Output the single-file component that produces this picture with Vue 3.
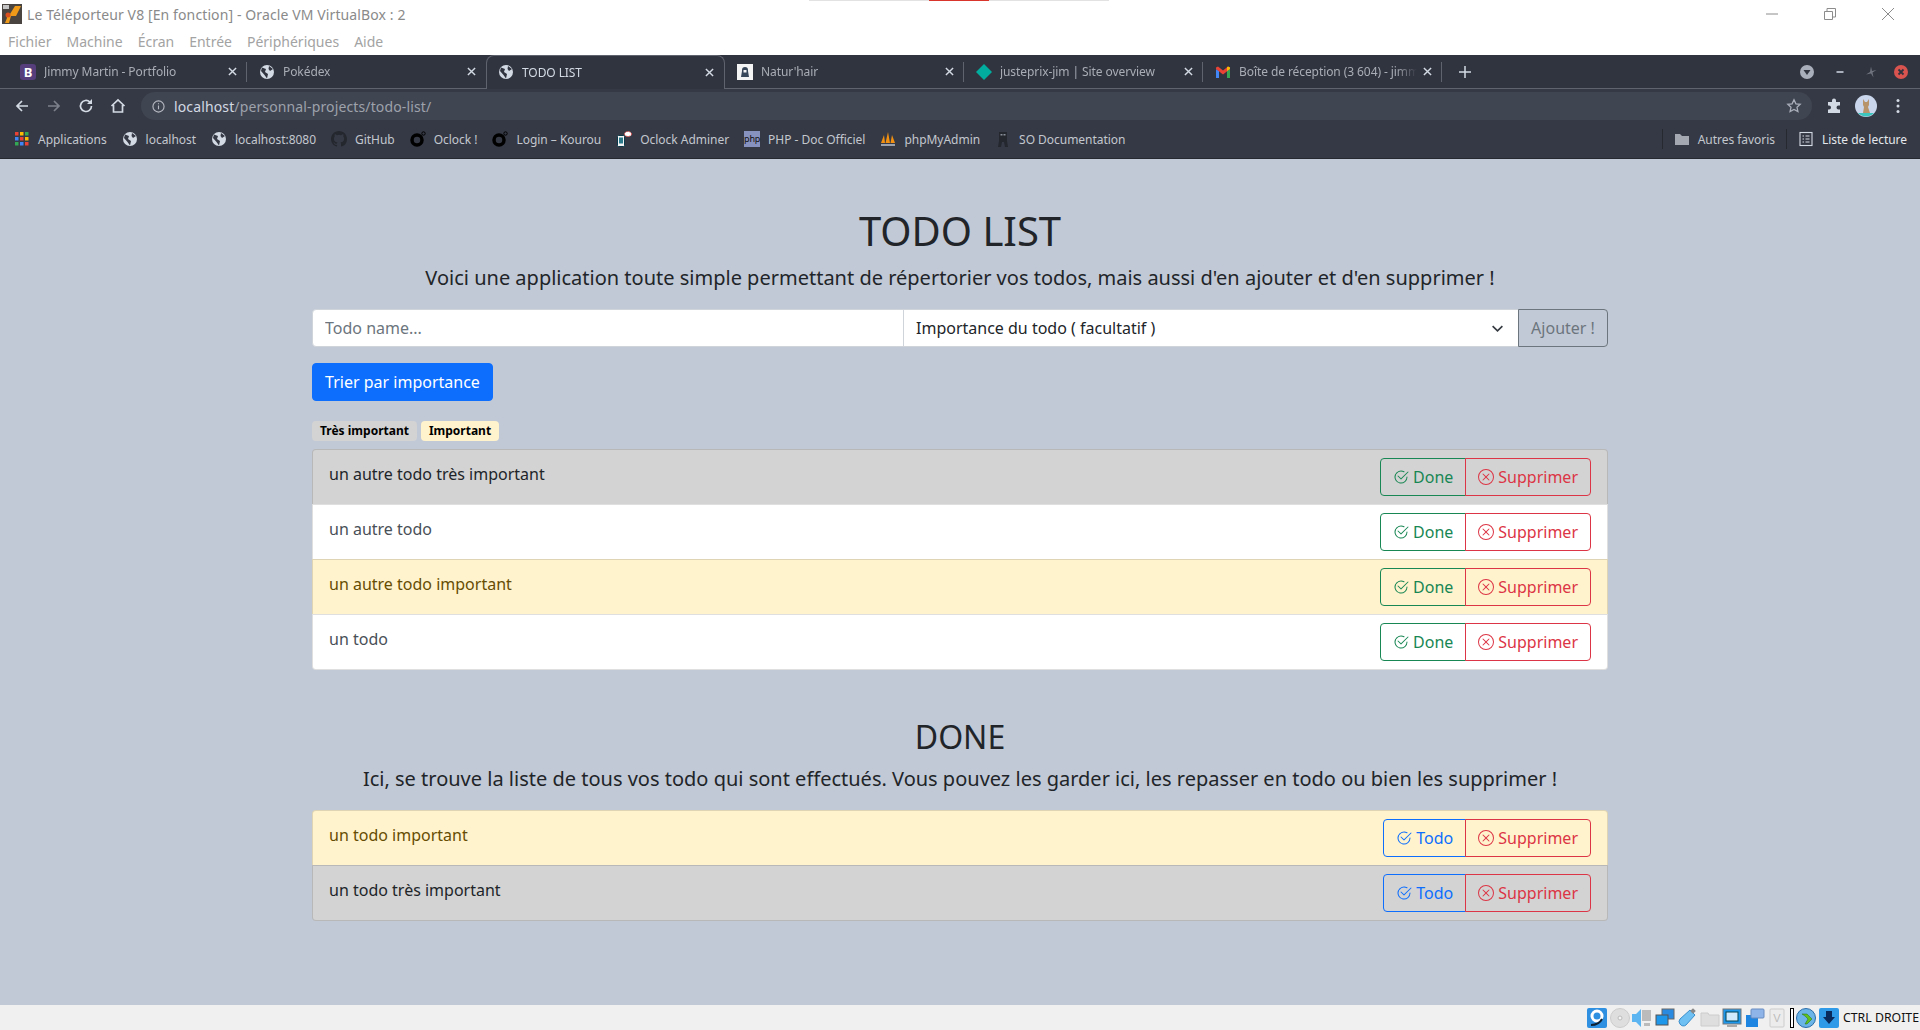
<script setup>
const menus = ['Fichier', 'Machine', 'Écran', 'Entrée', 'Périphériques', 'Aide']

const tabs = [
  { title: 'Jimmy Martin - Portfolio', icon: 'bootstrap' },
  { title: 'Pokédex', icon: 'globe' },
  { title: 'TODO LIST', icon: 'globe', active: true },
  { title: "Natur'hair", icon: 'hair' },
  { title: 'justeprix-jim | Site overview', icon: 'netlify' },
  { title: 'Boîte de réception (3 604) - jimmy', icon: 'gmail' },
]

const bookmarks = [
  { label: 'Applications', icon: 'apps' },
  { label: 'localhost', icon: 'globe' },
  { label: 'localhost:8080', icon: 'globe' },
  { label: 'GitHub', icon: 'github' },
  { label: 'Oclock !', icon: 'oclock' },
  { label: 'Login – Kourou', icon: 'oclock' },
  { label: 'Oclock Adminer', icon: 'adminer' },
  { label: 'PHP - Doc Officiel', icon: 'php' },
  { label: 'phpMyAdmin', icon: 'pma' },
  { label: 'SO Documentation', icon: 'so' },
]

const todos = [
  { name: 'un autre todo très important', level: 'high' },
  { name: 'un autre todo', level: 'none' },
  { name: 'un autre todo important', level: 'mid' },
  { name: 'un todo', level: 'none' },
]

const done = [
  { name: 'un todo important', level: 'mid' },
  { name: 'un todo très important', level: 'high' },
]
</script>

<template>
  <div class="screen">
    <!-- VirtualBox window -->
    <header class="vbox-head">
      <div class="vbox-strip"><i></i></div>
      <div class="vbox-title">
        <svg class="vbox-logo" viewBox="0 0 20 20">
          <rect width="20" height="20" fill="#4a4440" />
          <rect x="1" y="1" width="6" height="4" fill="#c4c4c4" />
          <path d="M4 10h4l5-8h6l-5 10H9l-2 7H3l2-5z" fill="#f09a1a" />
          <circle cx="6" cy="11" r="2.500" fill="#d9501e" />
        </svg>
        <span class="vbox-name">Le Téléporteur V8 [En fonction] - Oracle VM VirtualBox : 2</span>
        <div class="win-controls">
          <svg viewBox="0 0 12 12"><path d="M0 6h12" /></svg>
          <svg viewBox="0 0 12 12"><path d="M.5 3.500h8v8h-8zM3 3V.5h8.500V9H9" /></svg>
          <svg viewBox="0 0 12 12"><path d="M0 0l12 12M12 0L0 12" /></svg>
        </div>
      </div>
      <nav class="vbox-menu">
        <span v-for="m in menus" :key="m">{{ m }}</span>
      </nav>
    </header>

    <!-- Browser chrome -->
    <section class="browser">
      <div class="tabstrip">
        <div
          v-for="t in tabs"
          :key="t.title"
          class="tab"
          :class="{ 'tab--active': t.active }"
        >
          <span v-if="t.icon === 'bootstrap'" class="fav fav-b">B</span>
          <svg v-else-if="t.icon === 'globe'" class="fav" viewBox="0 0 16 16">
            <circle cx="8" cy="8" r="7" fill="#d3dae3" />
            <path d="M3 3.500 L7 5 L6 8 L9 10 L8 14.500 L5.500 11 L2 7z M10 2 L14 5 L11 7 L9.500 5z" fill="#30343f" />
          </svg>
          <svg v-else-if="t.icon === 'hair'" class="fav" viewBox="0 0 16 16">
            <rect width="16" height="16" fill="#f4f4f4" />
            <path d="M8 3a3 3 0 0 1 3 3v1l1 6H4l1-6V6a3 3 0 0 1 3-3z" fill="#38465a" />
            <rect x="6.500" y="6" width="3" height="2.500" fill="#f4f4f4" />
          </svg>
          <svg v-else-if="t.icon === 'netlify'" class="fav" viewBox="0 0 16 16">
            <path d="M8 0l8 8-8 8-8-8z" fill="#00ad9f" />
          </svg>
          <svg v-else class="fav" viewBox="0 0 16 16">
            <path d="M1 5v9h3V7z" fill="#4285f4" />
            <path d="M12 7v7h3V5z" fill="#34a853" />
            <path d="M1 3.500L3 2.500 8 6.500 13 2.500 15 3.500V5L8 10.500 1 5z" fill="#ea4335" />
            <path d="M12 3.300L13 2.500 15 3.500V5L12 7z" fill="#fbbc04" />
          </svg>
          <span class="tab-title">{{ t.title }}</span>
          <svg class="tab-close" viewBox="0 0 10 10"><path d="M1 1l8 8M9 1L1 9" /></svg>
        </div>
        <svg class="tab-plus" viewBox="0 0 12 12"><path d="M6 0v12M0 6h12" /></svg>
        <div class="gtk-controls">
          <svg class="gtk-down" viewBox="0 0 14 14">
            <circle cx="7" cy="7" r="7" fill="#aab0bb" />
            <path d="M3.500 5h7L7 10z" fill="#30343f" />
          </svg>
          <svg class="gtk-small" viewBox="0 0 14 14"><path d="M2.500 7h7" /></svg>
          <svg class="gtk-spark" viewBox="0 0 14 14"><path d="M7 1.500L8 6l4.500-1L8.500 7.500 9.500 12.500 7 8.500 2 9.500 6 7z" /></svg>
          <svg class="gtk-close" viewBox="0 0 14 14">
            <circle cx="7" cy="7" r="7" fill="#d9534f" />
            <path d="M4.500 4.500l5 5M9.500 4.500l-5 5" />
          </svg>
        </div>
      </div>

      <div class="toolbar">
        <svg class="tool" viewBox="0 0 16 16"><path d="M14 8H3M8 3L3 8l5 5" /></svg>
        <svg class="tool tool--off" viewBox="0 0 16 16"><path d="M2 8h11M8 3l5 5-5 5" /></svg>
        <svg class="tool" viewBox="0 0 16 16"><path d="M13.500 8a5.500 5.500 0 1 1-1.600-3.900" /><path class="solid" d="M14 1v5H9z" /></svg>
        <svg class="tool" viewBox="0 0 16 16"><path d="M1.500 8L8 2l6.500 6M3.500 7v7h9V7" /></svg>
        <div class="omnibox">
          <svg class="omni-info" viewBox="0 0 14 14">
            <circle cx="7" cy="7" r="6" />
            <path d="M7 6v4M7 3.500v1.200" />
          </svg>
          <span class="url"><b>localhost</b>/personnal-projects/todo-list/</span>
          <svg class="omni-star" viewBox="0 0 16 16">
            <path d="M8 1.800l1.900 4 4.300.5-3.200 3 .9 4.300L8 11.400l-3.900 2.200.9-4.300-3.200-3 4.300-.5z" />
          </svg>
        </div>
        <svg class="puzzle" viewBox="0 0 16 16">
          <path d="M6 2.500a2 2 0 0 1 4 0V4h4v3.500h-1.500a2 2 0 0 0 0 4H14V15H2v-3.500h1a2 2 0 0 0 0-4H2V4h4z" fill="#d3dae3" />
        </svg>
        <svg class="avatar" viewBox="0 0 22 22">
          <circle cx="11" cy="11" r="11" fill="#c9d6ec" />
          <path d="M3 18h16a11 11 0 0 1-16 0z" fill="#3cc5bd" />
          <path d="M8 4l2 3h2l2-3v6l-1 2 2 6H8l1-6-1-2z" fill="#b8946a" />
        </svg>
        <svg class="dots" viewBox="0 0 4 16">
          <circle cx="2" cy="2.500" r="1.500" /><circle cx="2" cy="8" r="1.500" /><circle cx="2" cy="13.500" r="1.500" />
        </svg>
      </div>

      <div class="bookmarks">
        <div v-for="b in bookmarks" :key="b.label" class="bm">
          <svg v-if="b.icon === 'apps'" class="bm-icon" viewBox="0 0 16 16">
            <g v-for="(c, i) in ['#ea4335', '#fbbc04', '#34a853', '#4285f4', '#ea4335', '#fbbc04', '#34a853', '#4285f4', '#ea4335']" :key="i">
              <rect :x="1 + (i % 3) * 5" :y="1 + Math.floor(i / 3) * 5" width="3.500" height="3.500" :fill="c" />
            </g>
          </svg>
          <svg v-else-if="b.icon === 'globe'" class="bm-icon" viewBox="0 0 16 16">
            <circle cx="8" cy="8" r="7" fill="#d3dae3" />
            <path d="M3 3.500 L7 5 L6 8 L9 10 L8 14.500 L5.500 11 L2 7z M10 2 L14 5 L11 7 L9.500 5z" fill="#353945" />
          </svg>
          <svg v-else-if="b.icon === 'github'" class="bm-icon" viewBox="0 0 16 16">
            <path fill="#24272e" d="M8 0C3.580 0 0 3.580 0 8c0 3.540 2.290 6.530 5.470 7.590.4.070.55-.17.55-.38v-1.340c-2.230.48-2.690-1.080-2.690-1.080-.36-.92-.89-1.170-.89-1.170-.73-.5.050-.49.050-.49.800.060 1.230.820 1.230.820.720 1.220 1.870.870 2.330.660.070-.520.280-.870.510-1.070-1.780-.2-3.640-.890-3.640-3.950 0-.870.310-1.590.820-2.150-.080-.2-.360-1.020.080-2.120 0 0 .670-.210 2.200.820a7.500 7.500 0 0 1 4 0c1.530-1.040 2.200-.820 2.200-.820.440 1.100.160 1.920.080 2.120.510.560.820 1.270.820 2.150 0 3.070-1.870 3.750-3.650 3.950.290.250.540.730.540 1.480v2.200c0 .210.150.460.550.380A8 8 0 0 0 16 8c0-4.420-3.580-8-8-8z" />
          </svg>
          <svg v-else-if="b.icon === 'oclock'" class="bm-icon" viewBox="0 0 16 16">
            <circle cx="7" cy="9" r="5" fill="none" stroke="#000" stroke-width="3.500" />
            <circle cx="13.500" cy="2.500" r="1.700" fill="none" stroke="#000" stroke-width="1" />
          </svg>
          <svg v-else-if="b.icon === 'adminer'" class="bm-icon" viewBox="0 0 16 16">
            <rect x="1.500" y="4.500" width="7" height="11" rx="1" fill="#f4f4f4" stroke="#0a3a4a" />
            <rect x="3" y="6.500" width="4" height="6" fill="#2b7a8c" />
            <ellipse cx="12" cy="3" rx="3.500" ry="2.500" fill="#fff" stroke="#e04040" stroke-dasharray="1.500 1" />
          </svg>
          <span v-else-if="b.icon === 'php'" class="bm-icon bm-php">php</span>
          <svg v-else-if="b.icon === 'pma'" class="bm-icon" viewBox="0 0 16 16">
            <path d="M1 12L4 4l1 8zM5.500 12L8 1l2 11zM10.500 12L12 4l3 8z" fill="#f29111" />
            <rect x="1" y="13" width="14" height="2" fill="#9aa0ac" />
          </svg>
          <svg v-else class="bm-icon" viewBox="0 0 16 16">
            <path d="M4 1h8v9l1 6h-3l-1-5H7l-1 5H3l1-6z" fill="#24272e" />
            <rect x="5.500" y="3" width="2" height="1.500" fill="#8a8f99" />
            <rect x="8.500" y="3" width="2" height="1.500" fill="#8a8f99" />
          </svg>
          <span>{{ b.label }}</span>
        </div>
        <div class="bm-right">
          <span class="bm-sep"></span>
          <div class="bm">
            <svg class="bm-icon" viewBox="0 0 16 16">
              <path d="M1 3h5l2 2h7v9H1z" fill="#a3a8b1" />
            </svg>
            <span>Autres favoris</span>
          </div>
          <span class="bm-sep"></span>
          <div class="bm">
            <svg class="bm-icon bm-list" viewBox="0 0 16 16">
              <rect x="2" y="1.500" width="12" height="13" />
              <path d="M4.500 5H6M4.500 8H6M4.500 11H6M7.500 5h4M7.500 8h4M7.500 11h4" />
            </svg>
            <span class="bm-bright">Liste de lecture</span>
          </div>
        </div>
      </div>
    </section>

    <!-- Page -->
    <main class="page">
      <div class="container">
        <h1>TODO LIST</h1>
        <p class="lead">Voici une application toute simple permettant de répertorier vos todos, mais aussi d'en ajouter et d'en supprimer !</p>

        <form class="input-group" @submit.prevent>
          <input type="text" class="field" placeholder="Todo name..." />
          <div class="field select">
            <span>Importance du todo ( facultatif )</span>
            <svg viewBox="0 0 16 16"><path d="M2 5l6 6 6-6" /></svg>
          </div>
          <button class="btn-add" type="button">Ajouter !</button>
        </form>

        <button class="btn-sort" type="button">Trier par importance</button>

        <div class="badges">
          <span class="badge level-high">Très important</span>
          <span class="badge level-mid">Important</span>
        </div>

        <ul class="list">
          <li v-for="t in todos" :key="t.name" class="row" :class="`level-${t.level}`">
            <span class="row-name">{{ t.name }}</span>
            <div class="btn-group">
              <button class="btn btn-green" type="button">
                <svg viewBox="0 0 16 16">
                  <path d="M2.500 8a5.500 5.500 0 0 1 8.250-4.764.5.500 0 0 0 .5-.866A6.500 6.500 0 1 0 14.500 8a.5.500 0 0 0-1 0 5.500 5.500 0 1 1-11 0z" />
                  <path d="M15.354 3.354a.5.500 0 0 0-.708-.708L8 9.293 5.354 6.646a.5.500 0 1 0-.708.708l3 3a.5.500 0 0 0 .708 0l7-7z" />
                </svg>
                Done
              </button>
              <button class="btn btn-red" type="button">
                <svg viewBox="0 0 16 16">
                  <path d="M8 15A7 7 0 1 1 8 1a7 7 0 0 1 0 14zm0 1A8 8 0 1 0 8 0a8 8 0 0 0 0 16z" />
                  <path d="M4.646 4.646a.5.500 0 0 1 .708 0L8 7.293l2.646-2.647a.5.500 0 0 1 .708.708L8.707 8l2.647 2.646a.5.500 0 0 1-.708.708L8 8.707l-2.646 2.647a.5.500 0 0 1-.708-.708L7.293 8 4.646 5.354a.5.500 0 0 1 0-.708z" />
                </svg>
                Supprimer
              </button>
            </div>
          </li>
        </ul>

        <h2>DONE</h2>
        <p class="lead">Ici, se trouve la liste de tous vos todo qui sont effectués. Vous pouvez les garder ici, les repasser en todo ou bien les supprimer !</p>

        <ul class="list">
          <li v-for="t in done" :key="t.name" class="row" :class="`level-${t.level}`">
            <span class="row-name">{{ t.name }}</span>
            <div class="btn-group">
              <button class="btn btn-blue" type="button">
                <svg viewBox="0 0 16 16">
                  <path d="M2.500 8a5.500 5.500 0 0 1 8.250-4.764.5.500 0 0 0 .5-.866A6.500 6.500 0 1 0 14.500 8a.5.500 0 0 0-1 0 5.500 5.500 0 1 1-11 0z" />
                  <path d="M15.354 3.354a.5.500 0 0 0-.708-.708L8 9.293 5.354 6.646a.5.500 0 1 0-.708.708l3 3a.5.500 0 0 0 .708 0l7-7z" />
                </svg>
                Todo
              </button>
              <button class="btn btn-red" type="button">
                <svg viewBox="0 0 16 16">
                  <path d="M8 15A7 7 0 1 1 8 1a7 7 0 0 1 0 14zm0 1A8 8 0 1 0 8 0a8 8 0 0 0 0 16z" />
                  <path d="M4.646 4.646a.5.500 0 0 1 .708 0L8 7.293l2.646-2.647a.5.500 0 0 1 .708.708L8.707 8l2.647 2.646a.5.500 0 0 1-.708.708L8 8.707l-2.646 2.647a.5.500 0 0 1-.708-.708L7.293 8 4.646 5.354a.5.500 0 0 1 0-.708z" />
                </svg>
                Supprimer
              </button>
            </div>
          </li>
        </ul>
      </div>
    </main>

    <!-- VirtualBox status bar -->
    <footer class="vbox-status">
      <svg viewBox="0 0 20 20"><rect width="20" height="20" rx="2" fill="#2f8fe0" /><circle cx="10" cy="8" r="5" fill="none" stroke="#fff" stroke-width="3" /><path d="M4 17c5 0 9-2 11-6" stroke="#123" stroke-width="2" fill="none" /></svg>
      <svg viewBox="0 0 20 20"><circle cx="10" cy="10" r="9.500" fill="#dedede" stroke="#ccc" /><circle cx="10" cy="10" r="2" fill="#f4f4f4" stroke="#bbb" /></svg>
      <svg viewBox="0 0 20 20"><path d="M0 6h4l5-5v18l-5-5H0z" fill="#5cb4f0" /><rect x="10" y="2" width="9" height="11" fill="#bbb" /><rect x="12" y="15" width="6" height="3" fill="#bbb" /></svg>
      <svg viewBox="0 0 20 20"><rect x="7" y="1" width="12" height="10" fill="#2a8ae0" stroke="#666" /><rect x="1" y="7" width="12" height="10" fill="#1e96ea" stroke="#555" /></svg>
      <svg viewBox="0 0 20 20"><path d="M13 2l5 5-9 10a4 4 0 0 1-6-1 4 4 0 0 1 0-5z" fill="#6fc0f2" stroke="#3a8ecc" /><rect x="14" y="1" width="4" height="4" fill="#888" transform="rotate(45 16 3)" /></svg>
      <svg viewBox="0 0 20 20"><path d="M1 5h7l1 2h10v11H1z" fill="#dedede" stroke="#ccc" /></svg>
      <svg viewBox="0 0 20 20"><rect x="1" y="1" width="18" height="15" fill="#1e96ea" stroke="#777" /><rect x="4" y="4" width="12" height="9" fill="#cfeafc" stroke="#045" /><rect x="5" y="17" width="10" height="2" fill="#aaa" /></svg>
      <svg viewBox="0 0 20 20"><rect x="1" y="7" width="12" height="12" fill="#1e86e0" /><rect x="6" y="1" width="13" height="9" rx="1" fill="#8fb4e8" stroke="#6a8cc0" /></svg>
      <svg viewBox="0 0 20 20"><rect x="3" y="1" width="14" height="18" rx="1" fill="#ececec" stroke="#ccc" /><text x="10" y="14" font-size="11" text-anchor="middle" fill="#bbb" font-family="Liberation Sans">V</text></svg>
      <span class="vbox-sep"></span>
      <svg viewBox="0 0 20 20"><circle cx="10" cy="10" r="9.500" fill="#6bb4e8" stroke="#2a6ca8" /><path d="M6 6h5l5 5-5 5H9l3-5-3-3z" fill="#5ec11d" stroke="#2a6a10" stroke-width=".5" /></svg>
      <svg viewBox="0 0 20 20"><rect width="20" height="20" rx="2" fill="#2f9ae8" /><path d="M7 3h6v6h3l-6 7-6-7h3z" fill="#0b2a5c" /></svg>
      <span class="vbox-key">CTRL DROITE</span>
    </footer>
  </div>
</template>

<style>
html, body { margin: 0; padding: 0; overflow: hidden; }
</style>

<style scoped>
* { box-sizing: border-box; }

.screen {
  width: 1920px;
  height: 1030px;
  display: flex;
  flex-direction: column;
  font-family: "Noto Sans", sans-serif;
  overflow: hidden;
  background: #c2c9d6;
}

/* --- VirtualBox header --- */
.vbox-head {
  height: 55px;
  background: #fff;
  position: relative;
  flex: none;
}
.vbox-strip {
  position: absolute;
  left: 809px;
  top: 0;
  width: 300px;
  height: 1px;
  background: #e2e2e2;
}
.vbox-strip i {
  display: block;
  margin-left: 120px;
  width: 60px;
  height: 1px;
  background: #d9352c;
}
.vbox-title {
  height: 28px;
  display: flex;
  align-items: center;
  padding-left: 2px;
  font-size: 14px;
  color: #8a8a8a;
}
.vbox-name { letter-spacing: 0.11px; }
.vbox-logo { width: 20px; height: 20px; margin-right: 5px; }
.win-controls {
  margin-left: auto;
  display: flex;
  gap: 46px;
  padding-right: 26px;
}
.win-controls svg {
  width: 12px;
  height: 12px;
  fill: none;
  stroke: #8c8c8c;
  stroke-width: 1;
}
.vbox-menu {
  height: 27px;
  display: flex;
  align-items: center;
  gap: 15px;
  padding-left: 8px;
  font-size: 14px;
  color: #a3a3a3;
}

/* --- Browser chrome --- */
.browser { flex: none; background: #353945; }
.tabstrip {
  height: 34px;
  display: flex;
  align-items: flex-end;
  padding-left: 8px;
  background: #30343f;
  border-bottom: 1px solid #5f636d;
  position: relative;
}
.tab {
  width: 239px;
  height: 33px;
  display: flex;
  align-items: center;
  padding: 0 10px 0 12px;
  font-size: 12px;
  color: #a9adb5;
  position: relative;
  flex: none;
}
.tab::after {
  content: "";
  position: absolute;
  right: 0;
  top: 7px;
  height: 20px;
  width: 1px;
  background: #5f636d;
}
.tab--active {
  background: #30343f;
  color: #d3dae3;
  border: 1px solid #5f636d;
  border-bottom: none;
  border-radius: 8px 8px 0 0;
  height: 34px;
  margin-bottom: -1px;
  padding-left: 11px;
  padding-bottom: 1px;
  z-index: 1;
}
.tab--active::after, .tab:nth-child(2)::after { display: none; }
.fav { width: 16px; height: 16px; flex: none; }
.fav-b {
  background: #563d7c;
  color: #fff;
  font-size: 13px;
  font-weight: 700;
  line-height: 16px;
  text-align: center;
  border-radius: 3px;
}
.tab-title {
  flex: 1;
  margin-left: 8px;
  white-space: nowrap;
  overflow: hidden;
  letter-spacing: -0.08px;
  -webkit-mask-image: linear-gradient(to right, #000 88%, transparent);
  mask-image: linear-gradient(to right, #000 88%, transparent);
}
.tab-close {
  width: 9px;
  height: 9px;
  margin-left: 6px;
  flex: none;
  fill: none;
  stroke: #d3dae3;
  stroke-width: 1.600;
}
.tab-plus {
  width: 12px;
  height: 12px;
  margin: 0 0 10px 17px;
  fill: none;
  stroke: #d3dae3;
  stroke-width: 1.500;
}
.gtk-controls {
  position: absolute;
  right: 12px;
  top: 10px;
  display: flex;
  align-items: center;
  gap: 16px;
}
.gtk-controls svg { width: 14px; height: 14px; fill: none; }
.gtk-down { margin-right: 4px; }
.gtk-small { stroke: #aab0bb; stroke-width: 2; }
.gtk-spark { fill: #6f747e !important; }
.gtk-close path { stroke: #30343f; stroke-width: 1.800; }

.toolbar {
  height: 34px;
  display: flex;
  align-items: center;
  padding: 0 0 0 14px;
  gap: 16px;
}
.tool {
  width: 16px;
  height: 16px;
  fill: none;
  stroke: #d3dae3;
  stroke-width: 1.700;
  flex: none;
}
.tool .solid { fill: #d3dae3; stroke: none; }
.tool--off { stroke: #7b808b; }
.omnibox {
  width: 1671px;
  height: 28px;
  margin-left: -1px;
  border-radius: 14px;
  background: #404552;
  display: flex;
  align-items: center;
  padding: 0 10px 0 11px;
  flex: none;
}
.omni-info {
  width: 13px;
  height: 13px;
  fill: none;
  stroke: #b6bac2;
  stroke-width: 1.200;
  margin-right: 9px;
}
.url { font-size: 14px; color: #9da2ab; flex: 1; letter-spacing: 0.13px; }
.url b { font-weight: 400; color: #d3dae3; }
.omni-star {
  width: 16px;
  height: 16px;
  fill: none;
  stroke: #aab0bb;
  stroke-width: 1.300;
}
.puzzle { width: 16px; height: 16px; margin-left: -2px; flex: none; }
.avatar { width: 22px; height: 22px; margin-left: -3px; flex: none; }
.dots { width: 4px; height: 16px; margin-left: 3px; fill: #d3dae3; flex: none; }

.bookmarks {
  height: 36px;
  display: flex;
  align-items: center;
  padding: 0 13px 3px 14px;
  gap: 15px;
  border-bottom: 1px solid #262930;
  font-size: 12px;
  letter-spacing: -0.03px;
  color: #c3c7ce;
}
.bm { display: flex; align-items: center; gap: 8px; white-space: nowrap; }
.bm-icon { width: 16px; height: 16px; flex: none; }
.bm-php {
  background: #8892bf;
  color: #111;
  font-size: 9px;
  line-height: 15px;
  text-align: center;
  letter-spacing: -0.2px;
}
.bm-list { fill: none; stroke: #d3dae3; stroke-width: 1.100; }
.bm-bright { color: #e4e7eb; }
.bm-right {
  margin-left: auto;
  display: flex;
  align-items: center;
  gap: 11px;
}
.bm-sep { width: 1px; height: 20px; background: #262930; }

/* --- Page --- */
.page {
  flex: 1;
  background: #c2c9d6;
  color: #212529;
}
.container {
  width: 1296px;
  margin: 0 auto;
  padding-top: 48px;
  text-align: center;
}
h1 {
  font-size: 40px;
  line-height: 48px;
  font-weight: 400;
  margin: 0 0 8px;
}
h2 {
  font-size: 32px;
  line-height: 38px;
  font-weight: 400;
  margin: 48px 0 8px;
}
.lead {
  font-size: 20px;
  line-height: 30px;
  margin: 0 0 16px;
}

.input-group { display: flex; height: 38px; margin: 0 0 16px; }
.field {
  flex: 1;
  min-width: 0;
  height: 38px;
  border: 1px solid #ced4da;
  background: #fff;
  font: 16px "Noto Sans", sans-serif;
  color: #212529;
  padding: 0 12px;
  text-align: left;
  outline: none;
}
.field::placeholder { color: #6c757d; opacity: 1; }
input.field { border-radius: 4px 0 0 4px; }
.select {
  flex: 0 0 616px;
  margin-left: -1px;
  display: flex;
  align-items: center;
  justify-content: space-between;
  padding-right: 14px;
}
.select svg {
  width: 13px;
  height: 13px;
  fill: none;
  stroke: #343a40;
  stroke-width: 2;
}
.btn-add {
  margin-left: -1px;
  width: 90px;
  height: 38px;
  flex: none;
  background: transparent;
  border: 1px solid #6c757d;
  border-radius: 0 4px 4px 0;
  color: #6c757d;
  font: 16px "Noto Sans", sans-serif;
  padding: 0;
}

.btn-sort {
  display: block;
  width: 181px;
  height: 38px;
  padding: 0;
  background: #0d6efd;
  color: #fff;
  border: 1px solid #0d6efd;
  border-radius: 4px;
  font: 16px "Noto Sans", sans-serif;
  margin: 0 0 20px;
}

.badges { display: flex; gap: 4px; margin: 0 0 8px; }
.badge {
  font-size: 12px;
  font-weight: 700;
  line-height: 12px;
  padding: 4px 8px;
  border-radius: 4px;
  color: #000;
}

.list {
  list-style: none;
  margin: 0;
  padding: 0;
  border-radius: 4px;
  text-align: left;
}
.row {
  display: flex;
  justify-content: space-between;
  align-items: flex-start;
  padding: 8px 16px;
  border: 1px solid rgba(0, 0, 0, 0.125);
  margin-top: -1px;
  height: 56px;
  font-size: 16px;
}
.list .row:first-child { margin-top: 0; border-radius: 4px 4px 0 0; }
.list .row:last-child { border-radius: 0 0 4px 4px; }
.row-name { padding-top: 4px; line-height: 24px; }
.level-none { background: #fff; color: #495057; }
.level-mid { background: #fff3cd; color: #664d03; }
.level-high { background: #d3d3d3; color: #212529; }
.badge.level-mid, .badge.level-high { color: #000; }

.btn-group { display: flex; flex: none; }
.btn {
  height: 38px;
  display: flex;
  align-items: center;
  gap: 4px;
  padding: 0 12px;
  background: transparent;
  border: 1px solid;
  font: 16px "Noto Sans", sans-serif;
}
.btn svg { width: 16px; height: 16px; fill: currentColor; }
.btn-green { color: #198754; border-color: #198754; border-radius: 4px 0 0 4px; }
.btn-blue { color: #0d6efd; border-color: #0d6efd; border-radius: 4px 0 0 4px; }
.btn-red { color: #dc3545; border-color: #dc3545; border-radius: 0 4px 4px 0; margin-left: -1px; }

/* --- VirtualBox status bar --- */
.vbox-status {
  height: 25px;
  flex: none;
  background: #f0f0f0;
  display: flex;
  align-items: center;
  justify-content: flex-end;
  gap: 2.500px;
  padding-right: 1px;
}
.vbox-status svg { width: 20px; height: 20px; flex: none; }
.vbox-sep { width: 4px; height: 20px; border: 1px solid #000; background: #fff; flex: none; }
.vbox-key { font-size: 12.300px; color: #111; margin-left: 2px; white-space: nowrap; }
</style>
